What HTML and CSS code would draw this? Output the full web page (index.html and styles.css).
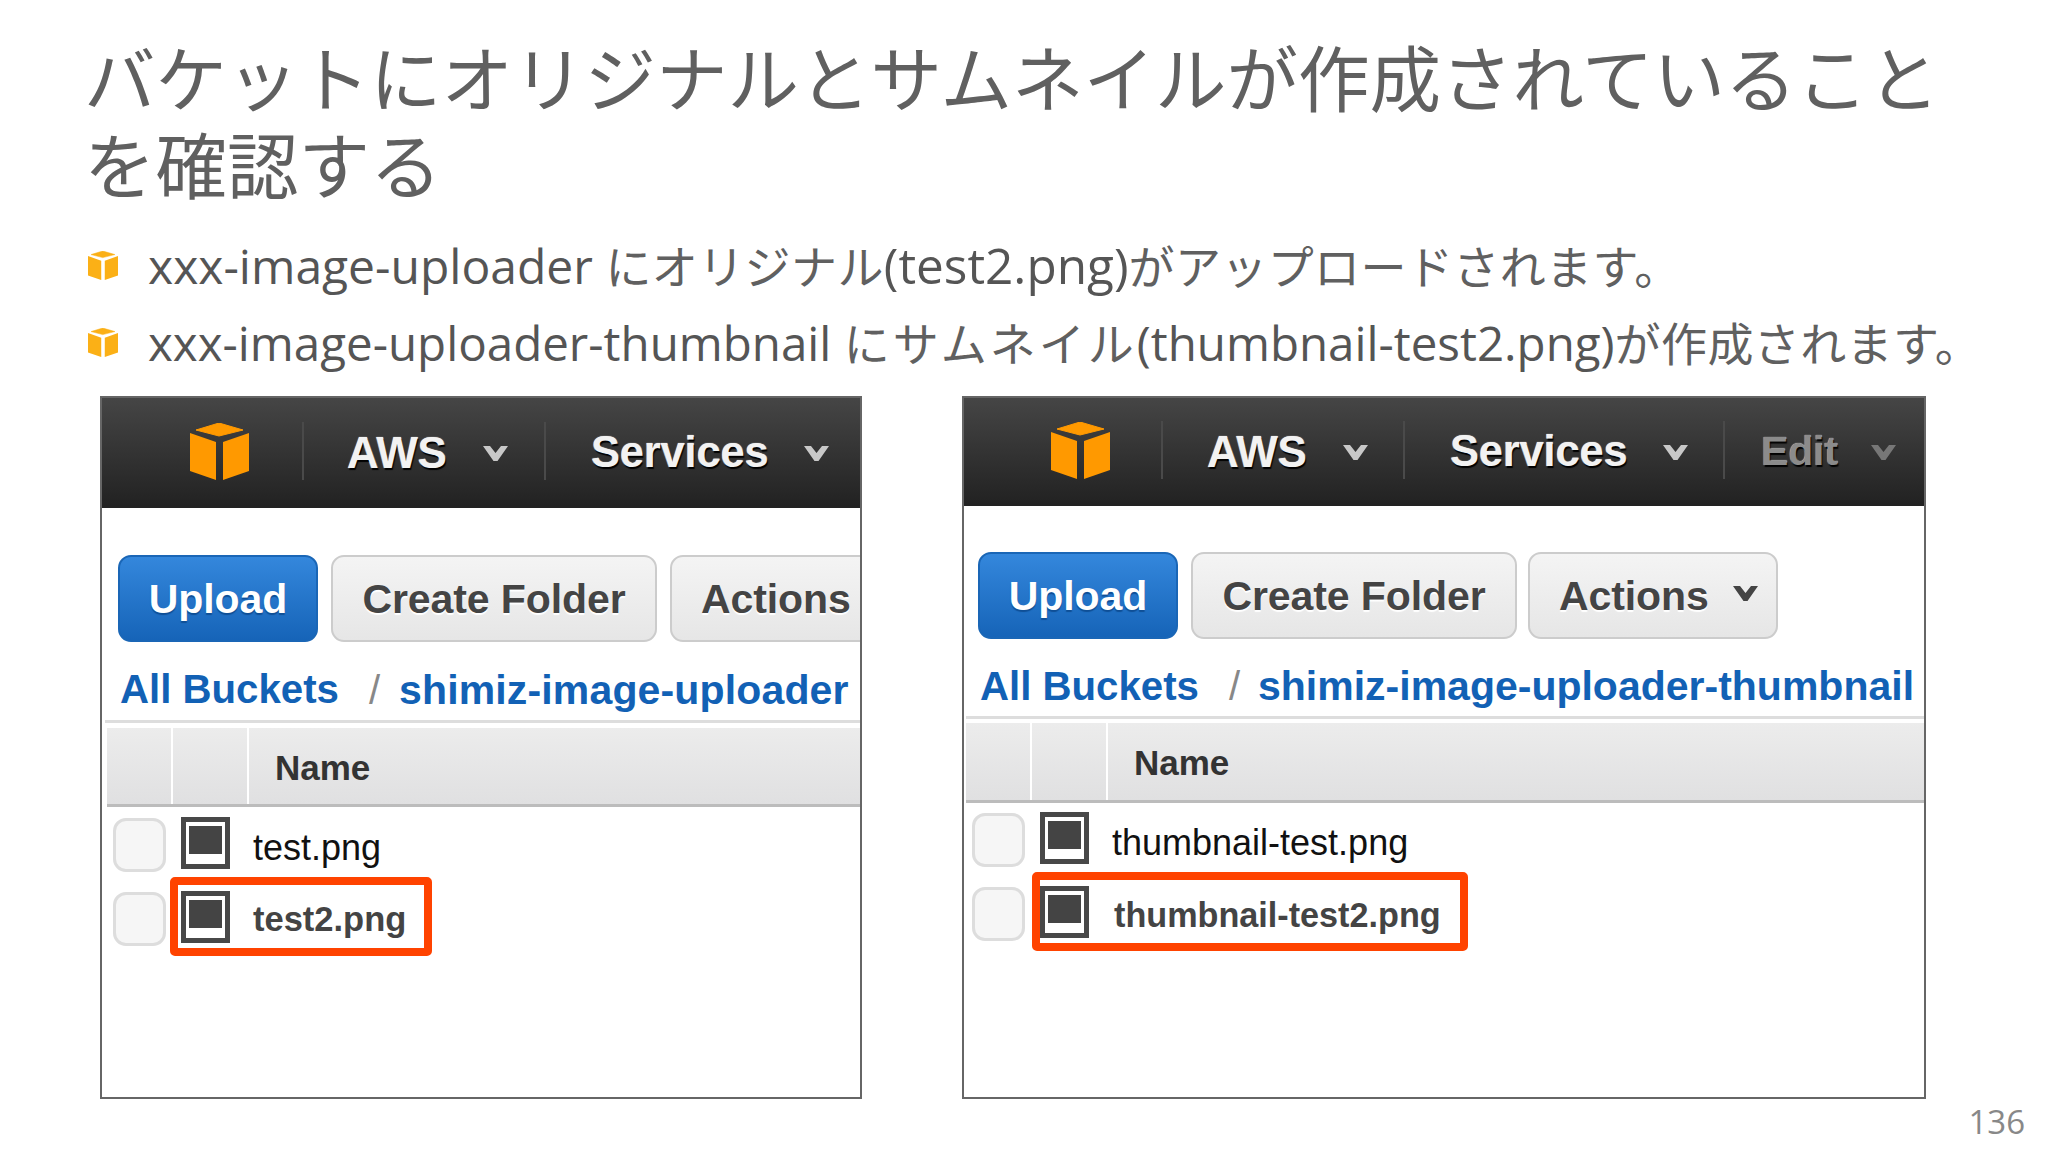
FILE: index.html
```html
<!DOCTYPE html>
<html lang="ja">
<head>
<meta charset="utf-8">
<title>バケットにオリジナルとサムネイルが作成されていることを確認する</title>
<link rel="stylesheet" href="styles.css">
</head>
<body>
<svg class="defs" width="0" height="0" aria-hidden="true">
  <symbol id="cube" viewBox="0 0 59 57">
    <path d="M29 0L53 7L29 13L6 7Z" fill="currentColor" stroke="currentColor" stroke-width="1" stroke-linejoin="round"/>
    <path d="M0 10L26 19V57L0 48Z" fill="currentColor"/>
    <path d="M33 19L59 10V48L33 57Z" fill="currentColor"/>
  </symbol>
  <symbol id="chev" viewBox="0 0 25 15">
    <path d="M0 0H7L12.5 7L18 0H25L14.5 15H10.5Z" fill="currentColor"/>
  </symbol>
  <symbol id="file" viewBox="0 0 49 52">
    <rect width="49" height="52" fill="#484848"/>
    <rect x="5" y="5" width="39" height="42" fill="#fff"/>
    <rect x="8" y="9" width="33" height="28" fill="#444"/>
  </symbol>
</svg>
<main class="slide">
  <h1 class="title">バケットにオリジナルとサムネイルが作成されていることを確認する</h1>
  <ul class="bullets">
    <li class="bullet"><svg class="bullet-icon"><use href="#cube"/></svg><span><span class="latin">xxx-image-uploader </span>にオリジナル<span class="latin latin-wide">(test2.png)</span>がアップロードされます。</span></li>
    <li class="bullet"><svg class="bullet-icon"><use href="#cube"/></svg><span><span class="latin latin-tight">xxx-image-uploader-thumbnail </span><span class="wide">にサムネイル</span><span class="latin latin-tight">(thumbnail-test2.png)</span>が作成されます。</span></li>
  </ul>
  <div class="shots">
    <section class="shot shot-left">
      <nav class="nav">
        <div class="cell cell-logo"><svg class="logo"><use href="#cube"/></svg></div>
        <div class="cell cell-aws"><span class="nav-text aws-text">AWS</span><svg class="chev"><use href="#chev"/></svg></div>
        <div class="cell cell-plain"><span class="nav-text">Services</span><svg class="chev"><use href="#chev"/></svg></div>
      </nav>
      <div class="toolbar">
        <button class="btn btn-primary">Upload</button>
        <button class="btn btn-create">Create Folder</button>
        <button class="btn btn-actions">Actions</button>
      </div>
      <div class="crumbs"><a class="crumb crumb-all">All Buckets</a><span class="slash">/</span><a class="crumb">shimiz-image-uploader</a></div>
      <div class="thead"><div class="th th-a"></div><div class="th th-b"></div><div class="th th-name">Name</div></div>
      <div class="rows">
        <div class="row"><span class="check"></span><svg class="file-icon"><use href="#file"/></svg><span class="fname">test.png</span></div>
        <div class="row"><span class="check"></span><svg class="file-icon"><use href="#file"/></svg><span class="fname fname-hit">test2.png</span><span class="mark mark-left"></span></div>
      </div>
    </section>
    <section class="shot shot-right">
      <nav class="nav">
        <div class="cell cell-logo"><svg class="logo"><use href="#cube"/></svg></div>
        <div class="cell cell-aws"><span class="nav-text aws-text">AWS</span><svg class="chev"><use href="#chev"/></svg></div>
        <div class="cell cell-plain"><span class="nav-text">Services</span><svg class="chev"><use href="#chev"/></svg></div>
        <div class="cell cell-edit"><span class="nav-text nav-dim">Edit</span><svg class="chev chev-dim"><use href="#chev"/></svg></div>
      </nav>
      <div class="toolbar">
        <button class="btn btn-primary">Upload</button>
        <button class="btn btn-create">Create Folder</button>
        <button class="btn btn-actions">Actions<svg class="chev chev-dark"><use href="#chev"/></svg></button>
      </div>
      <div class="crumbs"><a class="crumb crumb-all">All Buckets</a><span class="slash">/</span><a class="crumb">shimiz-image-uploader-thumbnail</a></div>
      <div class="thead"><div class="th th-a"></div><div class="th th-b"></div><div class="th th-name">Name</div></div>
      <div class="rows">
        <div class="row"><span class="check"></span><svg class="file-icon"><use href="#file"/></svg><span class="fname">thumbnail-test.png</span></div>
        <div class="row"><span class="check"></span><svg class="file-icon"><use href="#file"/></svg><span class="fname fname-hit">thumbnail-test2.png</span><span class="mark mark-right"></span></div>
      </div>
    </section>
  </div>
  <div class="page-no">136</div>
</main>
</body>
</html>
```
FILE: styles.css
```css
* { box-sizing: border-box; }
html, body { margin: 0; padding: 0; background: #fff; }
.defs { position: absolute; }
.slide {
  position: relative;
  width: 2048px;
  height: 1152px;
  overflow: hidden;
  padding: 32px 0 0 0;
  font-family: "Open Sans", "Noto Sans CJK JP", sans-serif;
  color: #555;
}
.title {
  margin: 0 0 0 84px;
  width: 1900px;
  font-family: "Noto Sans CJK JP", sans-serif;
  font-size: 71.5px;
  font-weight: 400;
  line-height: 87px;
  color: #606060;
}
.bullets { list-style: none; margin: 20px 0 16px; padding: 0 0 0 88px; }
.bullet {
  display: flex;
  align-items: center;
  gap: 30px;
  height: 77px;
  font-family: "Noto Sans CJK JP", sans-serif;
  font-size: 46px;
  font-weight: 400;
  letter-spacing: .4px;
  color: #606060;
  white-space: nowrap;
}
.latin { font-family: "Open Sans", sans-serif; font-size: 48px; font-weight: 400; letter-spacing: 0; color: #555; }
.latin-wide { font-size: 49.5px; }
.latin-tight { font-size: 47.5px; }
.wide { letter-spacing: 3px; }
.bullet-icon { width: 30px; height: 29px; margin-top: 2px; color: #fbb016; flex: none; }

.shots { display: flex; gap: 100px; padding-left: 100px; }
.shot {
  display: flex;
  flex-direction: column;
  height: 703px;
  border: 2px solid #666;
  overflow: hidden;
  font-family: "Liberation Sans", sans-serif;
}
.shot-left { width: 762px; }
.shot-right { width: 964px; }

.nav {
  display: flex;
  align-items: center;
  height: 112px;
  margin: -2px -2px 0;
  flex: none;
  background: linear-gradient(#464646, #222);
  border-bottom: 2px solid #222;
}
.shot-right .nav { height: 110px; }
.cell {
  display: flex;
  align-items: center;
  height: 58px;
  border-right: 2px solid #4a4a4a;
  flex: none;
}
.cell-logo { width: 204px; padding-left: 90px; }
.shot-right .cell-logo { width: 201px; padding-left: 89px; }
.logo { width: 59px; height: 57px; color: #ff9900; }
.cell-aws { width: 242px; padding-left: 43px; }
.shot-right .cell-aws { width: 242px; padding-left: 44px; }
.cell-plain { width: 320px; padding-left: 45px; }
.cell-edit { border-right: 0; padding-left: 36px; }
.nav-text {
  margin-top: 3px;
  font-size: 43.5px;
  font-weight: 700;
  letter-spacing: -.2px;
  color: #f2f2f2;
  text-shadow: 1px 2px 1px #000, 0 0 1px #fff;
}
.aws-text { font-size: 44px; }
.nav-dim { font-size: 41px; color: #8b8b8b; }
.chev { width: 25px; height: 15px; color: #c8c8c8; margin: 5px 0 0 36px; flex: none; }
.chev-dim { color: #777; margin-left: 33px; }
.chev-dark { color: #444; margin: -6px 0 0 24px; }

.toolbar { display: flex; gap: 13px; padding: 47px 0 0 16px; flex: none; }
.shot-right .toolbar { padding: 46px 0 0 14px; }
.btn {
  height: 87px;
  padding: 2px 0 0;
  border-radius: 13px;
  font-family: inherit;
  font-size: 41px;
  font-weight: 700;
  letter-spacing: -.1px;
  flex: none;
}
.btn-primary {
  width: 200px;
  color: #fff;
  background: linear-gradient(#3487dc, #1664b8);
  border: 2px solid #1a66b6;
  text-shadow: 0 2px 1px #0f4f96;
}
.btn-create, .btn-actions {
  color: #444;
  background: linear-gradient(#f4f4f4, #e6e6e6);
  border: 2px solid #ccc;
  text-shadow: 0 2px 1px #fff;
}
.btn-create { width: 326px; }
.btn-actions { width: 250px; display: flex; align-items: center; padding: 2px 0 0 29px; }
.shot-right .btn-actions { margin-left: -2px; }

.crumbs {
  display: flex;
  align-items: center;
  height: 81px;
  margin: 0 0 0 3px;
  padding: 18px 0 0 15px;
  flex: none;
  border-bottom: 3px solid #ddd;
  white-space: nowrap;
  font-size: 41px;
  font-weight: 700;
}
.shot-right .crumbs { height: 80px; margin-left: 2px; padding-left: 14px; }
.crumb { color: #1261b5; letter-spacing: .15px; }
.shot-right .crumb { letter-spacing: 0; }
.crumb-all { font-size: 40.2px; letter-spacing: 0; }
.slash { color: #888; margin: 0 19px 0 30px; font-weight: 400; font-size: 40px; }
.shot-right .slash { margin-right: 18px; }

.thead {
  display: flex;
  height: 79px;
  margin: 5px 0 0 5px;
  flex: none;
  background: linear-gradient(#ececec, #e0e0e1);
  border-bottom: 3px solid #bcbcbc;
}
.shot-right .thead { height: 80px; margin: 4px 0 0 2px; }
.th { border-right: 2px solid #fff; flex: none; }
.th-a { width: 66px; }
.th-b { width: 76px; }
.th-name {
  border: 0;
  padding-left: 26px;
  font-size: 35px;
  font-weight: 700;
  line-height: 80px;
  color: #333;
}

.rows { padding: 1px 0 0 11px; }
.shot-right .rows { padding: 0 0 0 8px; }
.row {
  position: relative;
  display: flex;
  align-items: center;
  height: 74px;
}
.check {
  width: 53px;
  height: 54px;
  border: 3px solid #ddd;
  border-radius: 13px;
  background: #f6f6f6;
  flex: none;
}
.file-icon { width: 49px; height: 52px; margin: -4px 0 0 15px; flex: none; }
.fname { margin: 6px 0 0 23px; font-size: 36px; color: #111; white-space: nowrap; }
.fname-hit { margin-top: 0; font-size: 34.5px; font-weight: 700; color: #444; }
.shot-right .fname-hit { margin: 3px 0 0 25px; font-size: 34.2px; }
.mark {
  position: absolute;
  top: -5px;
  left: 57px;
  height: 79px;
  border: 8px solid #ff4300;
  border-radius: 5px;
}
.mark-left { width: 262px; }
.mark-right { width: 436px; left: 60px; }

.page-no {
  position: absolute;
  right: 23px;
  bottom: 8px;
  font-size: 33px;
  font-weight: 400;
  color: #888;
}
```
